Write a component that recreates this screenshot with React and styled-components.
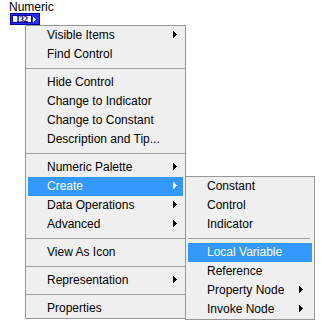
import styled, { createGlobalStyle } from 'styled-components'

const GlobalStyle = createGlobalStyle`
  body {
    margin: 0;
    background: #fff;
    font-family: "Liberation Sans", Arial, sans-serif;
  }
`

const Page = styled.div`
  position: relative;
  width: 322px;
  height: 324px;
  padding: 2px 0 0 9px;
  box-sizing: border-box;
  overflow: hidden;
`

const Caption = styled.div`
  font-size: 12px;
  line-height: 11px;
  color: #000;
`

const NumControl = styled.div`
  display: flex;
  align-items: stretch;
  width: 30px;
  height: 12px;
  margin: 0 0 0 1px;
  box-sizing: border-box;
  border: 1px solid #00009a;
  background: #2b2bff;
  padding: 1px;
`

const NumField = styled.div`
  flex: 1;
  background: #fff;
  border: 1px solid #00009a;
  display: flex;
  align-items: center;
  justify-content: center;
  overflow: hidden;
  font: bold 9px/1 "Liberation Serif", serif;
  letter-spacing: -0.3px;
  color: #00008a;
`

const RepTab = styled.div`
  width: 6px;
  display: flex;
  align-items: center;
  justify-content: center;
`

const Menu = styled.div`
  position: absolute;
  left: ${({ $sub }) => ($sub ? 'calc(100% + 2px)' : '25px')};
  top: ${({ $sub }) => ($sub ? '-1px' : '25px')};
  width: ${({ $width }) => $width}px;
  box-sizing: border-box;
  background: #f0f0f0;
  border: 1px solid #979797;
  padding: 0 2px;
  font-size: 12px;
  color: #000;
  z-index: ${({ $sub }) => ($sub ? 2 : 1)};
`

const Item = styled.div`
  position: relative;
  display: flex;
  align-items: center;
  height: 19px;
  padding: 0 ${({ $gap }) => $gap}px 2px 19px;
  box-sizing: border-box;
  background: ${({ $active }) => ($active ? '#3399ff' : 'transparent')};
  color: ${({ $active }) => ($active ? '#fff' : '#000')};
  white-space: nowrap;
`

const ItemLabel = styled.span`
  flex: 1;
`

const Separator = styled.div`
  height: 9px;
  display: flex;
  align-items: center;
  margin: ${({ $margin }) => $margin};

  &::after {
    content: '';
    flex: 1;
    height: 1px;
    background: #a0a0a0;
  }
`

const Arrow = () => (
  <svg width="4" height="7" viewBox="0 0 4 7" shapeRendering="crispEdges">
    <rect x="0" y="0" width="1" height="7" fill="currentColor" />
    <rect x="1" y="1" width="1" height="5" fill="currentColor" />
    <rect x="2" y="2" width="1" height="3" fill="currentColor" />
    <rect x="3" y="3" width="1" height="1" fill="currentColor" />
  </svg>
)

const mainItems = [
  { label: 'Visible Items', sub: true },
  { label: 'Find Control' },
  { sep: true },
  { label: 'Hide Control' },
  { label: 'Change to Indicator' },
  { label: 'Change to Constant' },
  { label: 'Description and Tip...' },
  { sep: true },
  { label: 'Numeric Palette', sub: true },
  { label: 'Create', sub: true, active: true, open: true },
  { label: 'Data Operations', sub: true },
  { label: 'Advanced', sub: true },
  { sep: true },
  { label: 'View As Icon' },
  { sep: true },
  { label: 'Representation', sub: true },
  { sep: true },
  { label: 'Properties' },
]

const createItems = [
  { label: 'Constant' },
  { label: 'Control' },
  { label: 'Indicator' },
  { sep: true },
  { label: 'Local Variable', active: true },
  { label: 'Reference' },
  { label: 'Property Node', sub: true },
  { label: 'Invoke Node', sub: true },
]

function MenuList({ items, gap, sepMargin, children }) {
  return items.map((item, i) =>
    item.sep ? (
      <Separator key={i} $margin={sepMargin} />
    ) : (
      <Item key={i} $active={item.active} $gap={gap}>
        <ItemLabel>{item.label}</ItemLabel>
        {item.sub && <Arrow />}
        {item.open && children}
      </Item>
    )
  )
}

export default function App() {
  return (
    <Page>
      <GlobalStyle />
      <Caption>Numeric</Caption>
      <NumControl>
        <NumField>I32</NumField>
        <RepTab>
          <svg width="4" height="5" viewBox="0 0 4 5" shapeRendering="crispEdges">
            <rect x="0" y="0" width="1" height="5" fill="#fff" />
            <rect x="1" y="1" width="1" height="3" fill="#fff" />
            <rect x="2" y="2" width="1" height="1" fill="#fff" />
          </svg>
        </RepTab>
      </NumControl>
      <Menu $width={161}>
        <MenuList items={mainItems} gap={6} sepMargin="0 -2px">
          <Menu $sub $width={130}>
            <MenuList items={createItems} gap={9} sepMargin="0 2px 0 0" />
          </Menu>
        </MenuList>
      </Menu>
    </Page>
  )
}
